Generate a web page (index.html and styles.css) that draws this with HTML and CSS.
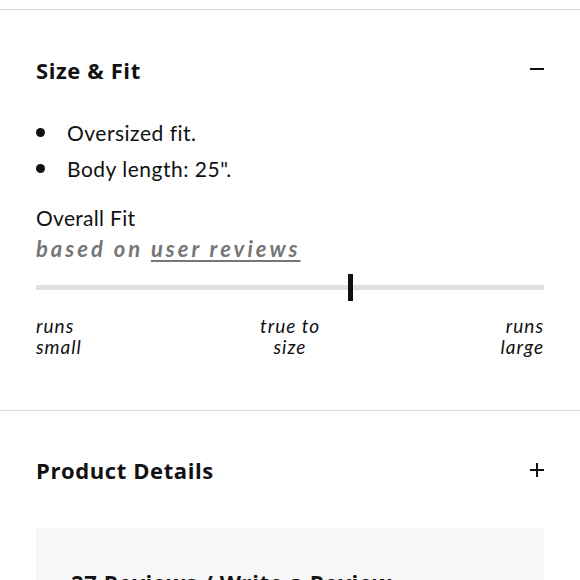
FILE: index.html
```html
<!DOCTYPE html>
<html>
<head>
<meta charset="utf-8">
<link rel="stylesheet" href="styles.css">
</head>
<body>
<div class="page">
  <section class="acc">
    <div class="acc-head">
      <h2 class="acc-title">Size &amp; Fit</h2>
      <span class="icon minus"></span>
    </div>
    <ul class="bullets">
      <li>Oversized fit.</li>
      <li>Body length: 25".</li>
    </ul>
    <div class="fit">
      <div class="fit-title">Overall Fit</div>
      <div class="fit-sub">based on <a class="fit-link">user reviews</a></div>
      <div class="track"><span class="thumb" style="left: 61.5%"></span></div>
      <div class="labels">
        <span class="lbl left">runs<br>small</span>
        <span class="lbl mid">true to<br>size</span>
        <span class="lbl right">runs<br>large</span>
      </div>
    </div>
  </section>
  <section class="acc closed">
    <div class="acc-head">
      <h2 class="acc-title">Product Details</h2>
      <span class="icon plus"></span>
    </div>
    <div class="reviews">
      <div class="reviews-title">27 Reviews / Write a Review</div>
    </div>
  </section>
</div>
</body>
</html>
```
FILE: styles.css
```css
html, body {
  margin: 0;
  padding: 0;
  background: #fff;
}
body {
  font-family: Lato, "Open Sans", sans-serif;
  color: #111;
  overflow: hidden;
  height: 580px;
}
.page {
  padding-top: 9px;
}
.acc {
  border-top: 1px solid #dcdcdc;
  padding: 0 36px;
}
.acc-head {
  display: flex;
  justify-content: space-between;
  align-items: center;
  height: 120px;
}
.acc-title {
  margin: 0;
  font-family: "Open Sans", sans-serif;
  font-weight: 700;
  font-size: 22px;
  letter-spacing: 0.6px;
  color: #111;
}
.icon {
  position: relative;
  width: 14px;
  height: 14px;
}
.icon::before, .icon::after {
  content: "";
  position: absolute;
  background: #111;
}
.icon::before {
  left: 0;
  top: 6px;
  width: 14px;
  height: 2px;
}
.plus::after {
  left: 6px;
  top: 0;
  width: 2px;
  height: 14px;
}
.minus { margin-top: -2px; }
.bullets {
  list-style: none;
  margin: -15px 0 0;
  padding: 0;
}
.bullets li {
  position: relative;
  font-size: 21px;
  letter-spacing: 0.5px;
  line-height: 36px;
  padding-left: 31px;
}
.bullets li::before {
  content: "";
  position: absolute;
  left: 0;
  top: 13px;
  width: 9px;
  height: 9px;
  border-radius: 50%;
  background: #111;
}
.fit {
  padding-top: 16px;
}
.fit-title {
  font-size: 21px;
  letter-spacing: 0.3px;
  line-height: 30px;
}
.fit-sub {
  font-size: 22px;
  line-height: 31px;
  font-style: italic;
  font-weight: 700;
  color: #767676;
  letter-spacing: 3px;
}
.fit-link {
  text-decoration: underline;
  text-decoration-thickness: 2px;
  text-underline-offset: 3px;
}
.track {
  position: relative;
  height: 5px;
  background: #e0e0e0;
  margin-top: 21px;
}
.thumb {
  position: absolute;
  top: -11px;
  width: 5px;
  height: 27px;
  background: #111;
}
.labels {
  display: grid;
  grid-template-columns: 1fr auto 1fr;
  margin-top: 25px;
  padding-bottom: 53px;
}
.lbl {
  font-style: italic;
  font-size: 19px;
  letter-spacing: 1px;
  line-height: 21px;
  color: #111;
}
.lbl.mid { text-align: center; }
.lbl.right { text-align: right; }
.closed .acc-head {
  height: 117px;
}
.reviews {
  background: #f7f7f7;
  height: 200px;
  padding: 39px 35px 0;
  box-sizing: border-box;
}
.reviews-title {
  font-family: "Open Sans", sans-serif;
  font-weight: 700;
  font-size: 22px;
  letter-spacing: 0.6px;
}
```
